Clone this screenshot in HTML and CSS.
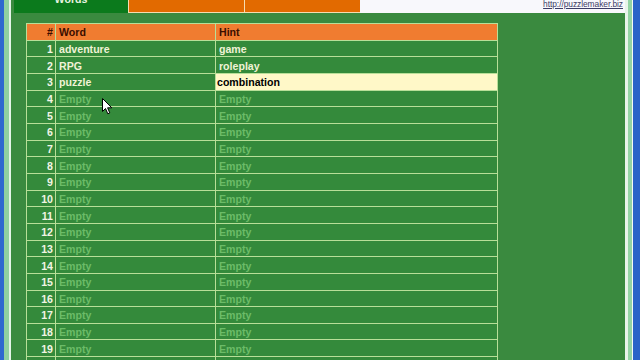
FILE: index.html
```html
<!DOCTYPE html>
<html>
<head>
<meta charset="utf-8">
<link rel="stylesheet" href="styles.css">
</head>
<body>
<div class="window">
  <div class="edge e-blue-l"></div>
  <div class="edge e-light-l"></div>
  <div class="edge e-white-l"></div>
  <div class="main">
    <div class="topbar">
      <div class="tab-gap"></div>
      <div class="tab tab-active"><span class="tab-label">Words</span></div>
      <div class="tab tab-orange"></div>
      <div class="tab tab-orange"></div>
      <div class="topfill"><a class="link" href="#">http://puzzlemaker.biz</a></div>
    </div>
    <div class="content">
      <div class="grid">
        <div class="hd num">#</div><div class="hd">Word</div><div class="hd">Hint</div>
        <div class="c num">1</div><div class="c w">adventure</div><div class="c w">game</div>
        <div class="c num">2</div><div class="c w">RPG</div><div class="c w">roleplay</div>
        <div class="c num">3</div><div class="c w">puzzle</div><div class="c edit">combination</div>
        <div class="c num">4</div><div class="c e">Empty</div><div class="c e">Empty</div>
        <div class="c num">5</div><div class="c e">Empty</div><div class="c e">Empty</div>
        <div class="c num">6</div><div class="c e">Empty</div><div class="c e">Empty</div>
        <div class="c num">7</div><div class="c e">Empty</div><div class="c e">Empty</div>
        <div class="c num">8</div><div class="c e">Empty</div><div class="c e">Empty</div>
        <div class="c num">9</div><div class="c e">Empty</div><div class="c e">Empty</div>
        <div class="c num">10</div><div class="c e">Empty</div><div class="c e">Empty</div>
        <div class="c num">11</div><div class="c e">Empty</div><div class="c e">Empty</div>
        <div class="c num">12</div><div class="c e">Empty</div><div class="c e">Empty</div>
        <div class="c num">13</div><div class="c e">Empty</div><div class="c e">Empty</div>
        <div class="c num">14</div><div class="c e">Empty</div><div class="c e">Empty</div>
        <div class="c num">15</div><div class="c e">Empty</div><div class="c e">Empty</div>
        <div class="c num">16</div><div class="c e">Empty</div><div class="c e">Empty</div>
        <div class="c num">17</div><div class="c e">Empty</div><div class="c e">Empty</div>
        <div class="c num">18</div><div class="c e">Empty</div><div class="c e">Empty</div>
        <div class="c num">19</div><div class="c e">Empty</div><div class="c e">Empty</div>
        <div class="c num">20</div><div class="c e">Empty</div><div class="c e">Empty</div>
      </div>
    </div>
  </div>
  <div class="edge e-pale-r"></div>
  <div class="edge e-light-r"></div>
  <div class="edge e-white-r"></div>
  <div class="edge e-blue-r"></div>
</div>
<svg class="cursor" width="12" height="18" viewBox="0 0 12 18">
  <path d="M0.5 0.5 L0.5 13.5 L3.5 10.5 L5.8 15.8 L7.8 14.9 L5.6 9.8 L9.8 9.8 Z" fill="#ffffff" stroke="#000000" stroke-width="1"/>
</svg>
</body>
</html>
```

FILE: styles.css
```css
html, body {
  margin: 0;
  padding: 0;
  width: 640px;
  height: 360px;
  overflow: hidden;
  background: #2a66cc;
  font-family: "Liberation Sans", Arial, sans-serif;
}

.window {
  display: flex;
  width: 640px;
  height: 360px;
  overflow: hidden;
}

.edge { flex: none; height: 100%; }
.e-blue-l { width: 4px; background: #2d68cf; }
.e-light-l { width: 5px; background: #8fd0a0; }
.e-white-l { width: 2px; background: #e4f4e8; }
.e-pale-r { width: 3px; background: #e8f4ea; }
.e-light-r { width: 4px; background: #94d4a4; }
.e-white-r { width: 1px; background: #f4fbf6; }
.e-blue-r { width: 7px; background: #2a64c8; }

.main {
  flex: 1;
  display: flex;
  flex-direction: column;
  background: #3a8a3f;
  min-width: 0;
}

.topbar {
  display: flex;
  height: 13px;
  flex: none;
}

.tab-gap { width: 3px; background: #3a8a3f; }

.tab {
  height: 13px;
  box-sizing: border-box;
  overflow: hidden;
  display: flex;
  justify-content: center;
  align-items: flex-start;
}

.tab-active {
  width: 114px;
  background: #0b7a1c;
}

.tab-label {
  color: #e8f4e0;
  font-weight: bold;
  font-size: 10.6px;
  line-height: 12px;
  margin-top: -7px;
}

.tab-orange {
  width: 116px;
  background: #e26a00;
  border-left: 1px solid #f6dcb0;
  border-bottom: 1px solid #f6dcb0;
}

.topfill {
  flex: 1;
  background: #f8f8fc;
  display: flex;
  justify-content: flex-end;
  align-items: flex-start;
  padding-right: 2px;
}

.link {
  font-size: 8.4px;
  line-height: 9px;
  color: #3c3c66;
  text-decoration: underline;
  letter-spacing: -0.05px;
}

.content {
  padding: 10px 0 0 15px;
}

.grid {
  display: grid;
  width: 470px;
  grid-template-columns: 28px 159px 281px;
  grid-auto-rows: 15.667px;
  gap: 1px;
  padding: 1px;
  background: #b8df98;
  font-size: 10.6px;
  font-weight: bold;
}

.hd, .c {
  display: flex;
  align-items: center;
  padding-left: 3px;
  padding-top: 1px;
  box-sizing: border-box;
  white-space: nowrap;
  overflow: hidden;
}

.hd {
  background: #f07c30;
  color: #3a0e00;
}

.c {
  background: #348a3b;
}

.num {
  justify-content: flex-end;
  padding-left: 0;
  padding-right: 2px;
}

.c.num { color: #f2f4e4; }

.w { color: #f0f2d6; }

.e { color: #6cbc68; }

.edit {
  background: #fff8c8;
  color: #000000;
  padding-left: 1px;
  padding-top: 0;
}

.cursor {
  position: absolute;
  left: 102px;
  top: 98px;
}
```
